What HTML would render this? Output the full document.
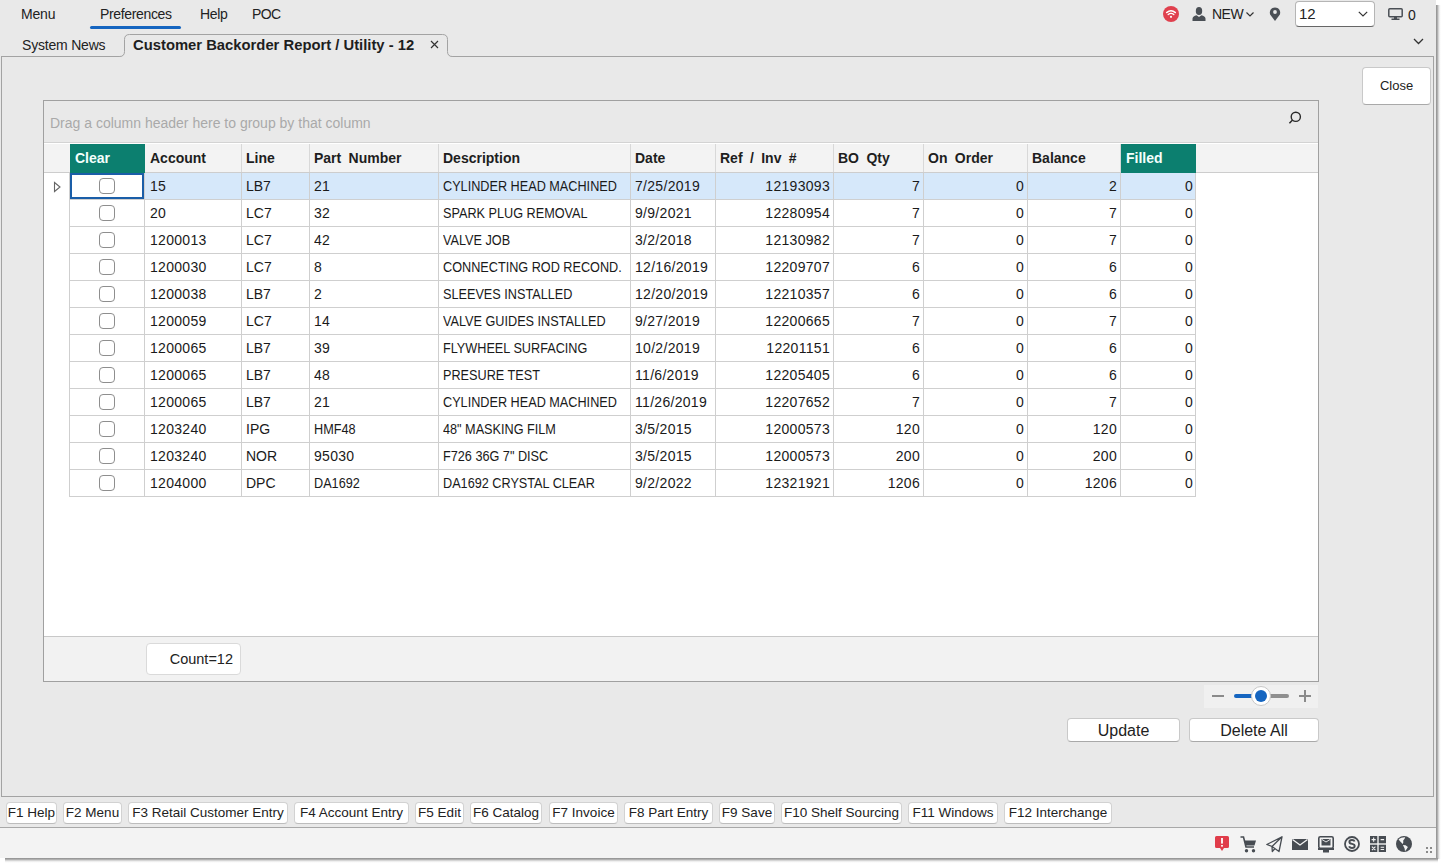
<!DOCTYPE html><html><head><meta charset='utf-8'><style>
*{box-sizing:border-box;margin:0;padding:0}
html,body{width:1442px;height:864px;overflow:hidden;background:#fff;font-family:"Liberation Sans", sans-serif;color:#222}
.a{position:absolute}
.t{position:absolute;white-space:pre;line-height:1}
#win{position:absolute;left:0;top:0;width:1436px;height:858px;background:#e9e9e9}
.cell{position:absolute;white-space:pre;overflow:hidden;font-size:13px;line-height:26px;color:#1a1a1a}
.hd{position:absolute;white-space:pre;font-size:14px;font-weight:700;line-height:28px;color:#1e1e1e;word-spacing:3.5px}
.fk{position:absolute;top:802px;height:22px;background:#fff;border:1px solid #d2d2d2;border-bottom-color:#bdbdbd;border-radius:4px;font-size:13.5px;line-height:20px;text-align:center;white-space:pre;color:#222}
.btn{position:absolute;background:#fff;border:1px solid #c9c9c9;border-bottom-color:#a9a9a9;border-radius:4px;text-align:center;white-space:pre;color:#222}
</style></head><body><div id='win'>
<div class='t' style='left:21px;top:7px;font-size:14px;letter-spacing:-0.2px'>Menu</div>
<div class='t' style='left:100px;top:7px;font-size:14px;letter-spacing:-0.35px'>Preferences</div>
<div class='a' style='left:90px;top:26px;width:91px;height:3px;border-radius:2px;background:#1565c0'></div>
<div class='t' style='left:200px;top:7px;font-size:14px;letter-spacing:-0.3px'>Help</div>
<div class='t' style='left:252px;top:7px;font-size:14px;letter-spacing:-0.6px'>POC</div>
<svg class='a' style='left:1162px;top:5px' width='18' height='18' viewBox='0 0 18 18'>
<circle cx='9' cy='9' r='8' fill='#e0404e'/>
<path d='M4.6 7.6 Q9 3.8 13.4 7.6' stroke='#fff' stroke-width='1.4' fill='none' stroke-linecap='round'/>
<path d='M6.2 9.5 Q9 7.2 11.8 9.5' stroke='#fff' stroke-width='1.4' fill='none' stroke-linecap='round'/>
<circle cx='9' cy='11.8' r='1.1' fill='#fff'/></svg>
<svg class='a' style='left:1192px;top:7px' width='14' height='14' viewBox='0 0 14 14'>
<ellipse cx='7' cy='4' rx='3.2' ry='4' fill='#4a4f55'/>
<path d='M0.5 14 L0.5 11.5 Q1 9 4.5 8.3 L7 10 L9.5 8.3 Q13 9 13.5 11.5 L13.5 14 Z' fill='#4a4f55'/></svg>
<div class='t' style='left:1212px;top:7px;font-size:14px;letter-spacing:-0.5px'>NEW</div>
<svg class='a' style='left:1246px;top:12px' width='8' height='5' viewBox='0 0 8 5'><path d='M0.5 0.5 L4 4 L7.5 0.5' stroke='#333' stroke-width='1.2' fill='none'/></svg>
<svg class='a' style='left:1269px;top:7px' width='12' height='14' viewBox='0 0 12 14'>
<path d='M6 14 L1.3 7.8 A5.2 5.2 0 1 1 10.7 7.8 Z' fill='#4a4f55'/><circle cx='6' cy='5' r='1.9' fill='#e9e9e9'/></svg>
<div class='a' style='left:1295px;top:1px;width:80px;height:26px;background:#fff;border:1px solid #b5b5b5;border-bottom:1.5px solid #666;border-radius:4px'></div>
<div class='t' style='left:1299px;top:6px;font-size:15px'>12</div>
<svg class='a' style='left:1358px;top:11px' width='10' height='6' viewBox='0 0 10 6'><path d='M0.8 0.8 L5 5 L9.2 0.8' stroke='#333' stroke-width='1.2' fill='none'/></svg>
<svg class='a' style='left:1388px;top:8px' width='15' height='12' viewBox='0 0 15 12'>
<rect x='0.8' y='0.8' width='13.4' height='8' rx='1' fill='none' stroke='#4a4f55' stroke-width='1.5'/>
<rect x='6' y='9' width='3' height='2' fill='#4a4f55'/><rect x='3.5' y='10.5' width='8' height='1.5' fill='#4a4f55'/></svg>
<div class='t' style='left:1408px;top:8px;font-size:14px'>0</div>
<div class='t' style='left:22px;top:38px;font-size:14px;letter-spacing:-0.2px'>System News</div>
<div class='a' style='left:1px;top:56px;width:1433px;height:741px;border:1px solid #a3a3a3;background:#e9e9e9'></div>
<svg class='a' style='left:0;top:0' width='470' height='60' viewBox='0 0 470 60'>
<path d='M119.5 57.5 L119.5 56.5 Q124.5 56.5 124.5 51.5 L124.5 39.5 Q124.5 34.5 129.5 34.5 L442.5 34.5 Q447.5 34.5 447.5 39.5 L447.5 51.5 Q447.5 56.5 452.5 56.5 L452.5 57.5 Z' fill='#e9e9e9'/>
<path d='M112 56.5 L119.5 56.5 Q124.5 56.5 124.5 51.5 L124.5 39.5 Q124.5 34.5 129.5 34.5 L442.5 34.5 Q447.5 34.5 447.5 39.5 L447.5 51.5 Q447.5 56.5 452.5 56.5 L460 56.5' fill='none' stroke='#a3a3a3' stroke-width='1'/></svg>
<div class='t' style='left:133px;top:38px;font-size:14.8px;font-weight:700;color:#1e1e1e'>Customer Backorder Report / Utility - 12</div>
<svg class='a' style='left:430px;top:40px' width='9' height='9' viewBox='0 0 9 9'><path d='M1 1 L8 8 M8 1 L1 8' stroke='#333' stroke-width='1.2'/></svg>
<svg class='a' style='left:1413px;top:38px' width='11' height='7' viewBox='0 0 11 7'><path d='M1 1 L5.5 5.5 L10 1' stroke='#333' stroke-width='1.3' fill='none'/></svg>
<div class='btn' style='left:1362px;top:67px;width:69px;height:38px;font-size:13px;line-height:36px'>Close</div>
<div class='a' style='left:43px;top:100px;width:1276px;height:582px;border:1px solid #a0a0a0;background:#fff'></div>
<div class='a' style='left:44px;top:101px;width:1274px;height:42px;background:#e9e9e9;border-bottom:1px solid #d3d3d3'></div>
<div class='t' style='left:50px;top:116px;font-size:14px;color:#a9a9a9'>Drag a column header here to group by that column</div>
<svg class='a' style='left:1287px;top:111px' width='15' height='15' viewBox='0 0 15 15'><circle cx='8.8' cy='5.8' r='4.6' fill='none' stroke='#2a2a2a' stroke-width='1.4'/><path d='M5.6 9 L2.4 12.2' stroke='#2a2a2a' stroke-width='1.5'/></svg>
<div class='a' style='left:44px;top:144px;width:1274px;height:28px;background:#f3f3f3'></div>
<div class='a' style='left:44px;top:172px;width:1274px;height:1px;background:#cdcdcd'></div>
<div class='a' style='left:70px;top:144px;width:75px;height:29px;background:#0c7f6f'></div>
<div class='hd' style='left:75px;top:144px;color:#f4fffd'>Clear</div>
<div class='hd' style='left:150px;top:144px'>Account</div>
<div class='hd' style='left:246px;top:144px'>Line</div>
<div class='hd' style='left:314px;top:144px'>Part Number</div>
<div class='hd' style='left:443px;top:144px'>Description</div>
<div class='hd' style='left:635px;top:144px'>Date</div>
<div class='hd' style='left:720px;top:144px'>Ref / Inv #</div>
<div class='hd' style='left:838px;top:144px'>BO Qty</div>
<div class='hd' style='left:928px;top:144px'>On Order</div>
<div class='hd' style='left:1032px;top:144px'>Balance</div>
<div class='a' style='left:1121px;top:144px;width:75px;height:29px;background:#0c7f6f'></div>
<div class='hd' style='left:1126px;top:144px;color:#f4fffd'>Filled</div>
<div class='a' style='left:241px;top:144px;width:1px;height:28px;background:#d8d8d8'></div>
<div class='a' style='left:309px;top:144px;width:1px;height:28px;background:#d8d8d8'></div>
<div class='a' style='left:438px;top:144px;width:1px;height:28px;background:#d8d8d8'></div>
<div class='a' style='left:630px;top:144px;width:1px;height:28px;background:#d8d8d8'></div>
<div class='a' style='left:715px;top:144px;width:1px;height:28px;background:#d8d8d8'></div>
<div class='a' style='left:833px;top:144px;width:1px;height:28px;background:#d8d8d8'></div>
<div class='a' style='left:923px;top:144px;width:1px;height:28px;background:#d8d8d8'></div>
<div class='a' style='left:1027px;top:144px;width:1px;height:28px;background:#d8d8d8'></div>
<div class='a' style='left:1120px;top:144px;width:1px;height:28px;background:#d8d8d8'></div>
<div class='a' style='left:145px;top:173px;width:1051px;height:26px;background:#d6e8fa'></div>
<div class='a' style='left:99px;top:178px;width:16px;height:16px;border:1px solid #8e8e8e;border-radius:4px;background:#fff'></div>
<div class='cell' style='left:150px;top:173px;font-size:14px;letter-spacing:0.3px;'>15</div>
<div class='cell' style='left:246px;top:173px;font-size:14px;'>LB7</div>
<div class='cell' style='left:314px;top:173px;font-size:14px;letter-spacing:0.3px;'>21</div>
<div class='cell' style='left:443px;top:173px;font-size:14px;'><span style='display:inline-block;transform:scaleX(0.905);transform-origin:0 50%'>CYLINDER HEAD MACHINED</span></div>
<div class='cell' style='left:635px;top:173px;font-size:14px;letter-spacing:0.3px;'>7/25/2019</div>
<div class='cell' style='left:715px;top:173px;width:115px;text-align:right;font-size:14px;letter-spacing:0.3px'>12193093</div>
<div class='cell' style='left:833px;top:173px;width:87px;text-align:right;font-size:14px;letter-spacing:0.3px'>7</div>
<div class='cell' style='left:923px;top:173px;width:101px;text-align:right;font-size:14px;letter-spacing:0.3px'>0</div>
<div class='cell' style='left:1027px;top:173px;width:90px;text-align:right;font-size:14px;letter-spacing:0.3px'>2</div>
<div class='cell' style='left:1120px;top:173px;width:73px;text-align:right;font-size:14px;letter-spacing:0.3px'>0</div>
<div class='a' style='left:69px;top:199px;width:1127px;height:1px;background:#cfcfcf'></div>
<div class='a' style='left:99px;top:205px;width:16px;height:16px;border:1px solid #8e8e8e;border-radius:4px;background:#fff'></div>
<div class='cell' style='left:150px;top:200px;font-size:14px;letter-spacing:0.3px;'>20</div>
<div class='cell' style='left:246px;top:200px;font-size:14px;'>LC7</div>
<div class='cell' style='left:314px;top:200px;font-size:14px;letter-spacing:0.3px;'>32</div>
<div class='cell' style='left:443px;top:200px;font-size:14px;'><span style='display:inline-block;transform:scaleX(0.905);transform-origin:0 50%'>SPARK PLUG REMOVAL</span></div>
<div class='cell' style='left:635px;top:200px;font-size:14px;letter-spacing:0.3px;'>9/9/2021</div>
<div class='cell' style='left:715px;top:200px;width:115px;text-align:right;font-size:14px;letter-spacing:0.3px'>12280954</div>
<div class='cell' style='left:833px;top:200px;width:87px;text-align:right;font-size:14px;letter-spacing:0.3px'>7</div>
<div class='cell' style='left:923px;top:200px;width:101px;text-align:right;font-size:14px;letter-spacing:0.3px'>0</div>
<div class='cell' style='left:1027px;top:200px;width:90px;text-align:right;font-size:14px;letter-spacing:0.3px'>7</div>
<div class='cell' style='left:1120px;top:200px;width:73px;text-align:right;font-size:14px;letter-spacing:0.3px'>0</div>
<div class='a' style='left:69px;top:226px;width:1127px;height:1px;background:#cfcfcf'></div>
<div class='a' style='left:99px;top:232px;width:16px;height:16px;border:1px solid #8e8e8e;border-radius:4px;background:#fff'></div>
<div class='cell' style='left:150px;top:227px;font-size:14px;letter-spacing:0.3px;'>1200013</div>
<div class='cell' style='left:246px;top:227px;font-size:14px;'>LC7</div>
<div class='cell' style='left:314px;top:227px;font-size:14px;letter-spacing:0.3px;'>42</div>
<div class='cell' style='left:443px;top:227px;font-size:14px;'><span style='display:inline-block;transform:scaleX(0.905);transform-origin:0 50%'>VALVE JOB</span></div>
<div class='cell' style='left:635px;top:227px;font-size:14px;letter-spacing:0.3px;'>3/2/2018</div>
<div class='cell' style='left:715px;top:227px;width:115px;text-align:right;font-size:14px;letter-spacing:0.3px'>12130982</div>
<div class='cell' style='left:833px;top:227px;width:87px;text-align:right;font-size:14px;letter-spacing:0.3px'>7</div>
<div class='cell' style='left:923px;top:227px;width:101px;text-align:right;font-size:14px;letter-spacing:0.3px'>0</div>
<div class='cell' style='left:1027px;top:227px;width:90px;text-align:right;font-size:14px;letter-spacing:0.3px'>7</div>
<div class='cell' style='left:1120px;top:227px;width:73px;text-align:right;font-size:14px;letter-spacing:0.3px'>0</div>
<div class='a' style='left:69px;top:253px;width:1127px;height:1px;background:#cfcfcf'></div>
<div class='a' style='left:99px;top:259px;width:16px;height:16px;border:1px solid #8e8e8e;border-radius:4px;background:#fff'></div>
<div class='cell' style='left:150px;top:254px;font-size:14px;letter-spacing:0.3px;'>1200030</div>
<div class='cell' style='left:246px;top:254px;font-size:14px;'>LC7</div>
<div class='cell' style='left:314px;top:254px;font-size:14px;letter-spacing:0.3px;'>8</div>
<div class='cell' style='left:443px;top:254px;font-size:14px;'><span style='display:inline-block;transform:scaleX(0.905);transform-origin:0 50%'>CONNECTING ROD RECOND.</span></div>
<div class='cell' style='left:635px;top:254px;font-size:14px;letter-spacing:0.3px;'>12/16/2019</div>
<div class='cell' style='left:715px;top:254px;width:115px;text-align:right;font-size:14px;letter-spacing:0.3px'>12209707</div>
<div class='cell' style='left:833px;top:254px;width:87px;text-align:right;font-size:14px;letter-spacing:0.3px'>6</div>
<div class='cell' style='left:923px;top:254px;width:101px;text-align:right;font-size:14px;letter-spacing:0.3px'>0</div>
<div class='cell' style='left:1027px;top:254px;width:90px;text-align:right;font-size:14px;letter-spacing:0.3px'>6</div>
<div class='cell' style='left:1120px;top:254px;width:73px;text-align:right;font-size:14px;letter-spacing:0.3px'>0</div>
<div class='a' style='left:69px;top:280px;width:1127px;height:1px;background:#cfcfcf'></div>
<div class='a' style='left:99px;top:286px;width:16px;height:16px;border:1px solid #8e8e8e;border-radius:4px;background:#fff'></div>
<div class='cell' style='left:150px;top:281px;font-size:14px;letter-spacing:0.3px;'>1200038</div>
<div class='cell' style='left:246px;top:281px;font-size:14px;'>LB7</div>
<div class='cell' style='left:314px;top:281px;font-size:14px;letter-spacing:0.3px;'>2</div>
<div class='cell' style='left:443px;top:281px;font-size:14px;'><span style='display:inline-block;transform:scaleX(0.905);transform-origin:0 50%'>SLEEVES INSTALLED</span></div>
<div class='cell' style='left:635px;top:281px;font-size:14px;letter-spacing:0.3px;'>12/20/2019</div>
<div class='cell' style='left:715px;top:281px;width:115px;text-align:right;font-size:14px;letter-spacing:0.3px'>12210357</div>
<div class='cell' style='left:833px;top:281px;width:87px;text-align:right;font-size:14px;letter-spacing:0.3px'>6</div>
<div class='cell' style='left:923px;top:281px;width:101px;text-align:right;font-size:14px;letter-spacing:0.3px'>0</div>
<div class='cell' style='left:1027px;top:281px;width:90px;text-align:right;font-size:14px;letter-spacing:0.3px'>6</div>
<div class='cell' style='left:1120px;top:281px;width:73px;text-align:right;font-size:14px;letter-spacing:0.3px'>0</div>
<div class='a' style='left:69px;top:307px;width:1127px;height:1px;background:#cfcfcf'></div>
<div class='a' style='left:99px;top:313px;width:16px;height:16px;border:1px solid #8e8e8e;border-radius:4px;background:#fff'></div>
<div class='cell' style='left:150px;top:308px;font-size:14px;letter-spacing:0.3px;'>1200059</div>
<div class='cell' style='left:246px;top:308px;font-size:14px;'>LC7</div>
<div class='cell' style='left:314px;top:308px;font-size:14px;letter-spacing:0.3px;'>14</div>
<div class='cell' style='left:443px;top:308px;font-size:14px;'><span style='display:inline-block;transform:scaleX(0.905);transform-origin:0 50%'>VALVE GUIDES INSTALLED</span></div>
<div class='cell' style='left:635px;top:308px;font-size:14px;letter-spacing:0.3px;'>9/27/2019</div>
<div class='cell' style='left:715px;top:308px;width:115px;text-align:right;font-size:14px;letter-spacing:0.3px'>12200665</div>
<div class='cell' style='left:833px;top:308px;width:87px;text-align:right;font-size:14px;letter-spacing:0.3px'>7</div>
<div class='cell' style='left:923px;top:308px;width:101px;text-align:right;font-size:14px;letter-spacing:0.3px'>0</div>
<div class='cell' style='left:1027px;top:308px;width:90px;text-align:right;font-size:14px;letter-spacing:0.3px'>7</div>
<div class='cell' style='left:1120px;top:308px;width:73px;text-align:right;font-size:14px;letter-spacing:0.3px'>0</div>
<div class='a' style='left:69px;top:334px;width:1127px;height:1px;background:#cfcfcf'></div>
<div class='a' style='left:99px;top:340px;width:16px;height:16px;border:1px solid #8e8e8e;border-radius:4px;background:#fff'></div>
<div class='cell' style='left:150px;top:335px;font-size:14px;letter-spacing:0.3px;'>1200065</div>
<div class='cell' style='left:246px;top:335px;font-size:14px;'>LB7</div>
<div class='cell' style='left:314px;top:335px;font-size:14px;letter-spacing:0.3px;'>39</div>
<div class='cell' style='left:443px;top:335px;font-size:14px;'><span style='display:inline-block;transform:scaleX(0.905);transform-origin:0 50%'>FLYWHEEL SURFACING</span></div>
<div class='cell' style='left:635px;top:335px;font-size:14px;letter-spacing:0.3px;'>10/2/2019</div>
<div class='cell' style='left:715px;top:335px;width:115px;text-align:right;font-size:14px;letter-spacing:0.3px'>12201151</div>
<div class='cell' style='left:833px;top:335px;width:87px;text-align:right;font-size:14px;letter-spacing:0.3px'>6</div>
<div class='cell' style='left:923px;top:335px;width:101px;text-align:right;font-size:14px;letter-spacing:0.3px'>0</div>
<div class='cell' style='left:1027px;top:335px;width:90px;text-align:right;font-size:14px;letter-spacing:0.3px'>6</div>
<div class='cell' style='left:1120px;top:335px;width:73px;text-align:right;font-size:14px;letter-spacing:0.3px'>0</div>
<div class='a' style='left:69px;top:361px;width:1127px;height:1px;background:#cfcfcf'></div>
<div class='a' style='left:99px;top:367px;width:16px;height:16px;border:1px solid #8e8e8e;border-radius:4px;background:#fff'></div>
<div class='cell' style='left:150px;top:362px;font-size:14px;letter-spacing:0.3px;'>1200065</div>
<div class='cell' style='left:246px;top:362px;font-size:14px;'>LB7</div>
<div class='cell' style='left:314px;top:362px;font-size:14px;letter-spacing:0.3px;'>48</div>
<div class='cell' style='left:443px;top:362px;font-size:14px;'><span style='display:inline-block;transform:scaleX(0.905);transform-origin:0 50%'>PRESURE TEST</span></div>
<div class='cell' style='left:635px;top:362px;font-size:14px;letter-spacing:0.3px;'>11/6/2019</div>
<div class='cell' style='left:715px;top:362px;width:115px;text-align:right;font-size:14px;letter-spacing:0.3px'>12205405</div>
<div class='cell' style='left:833px;top:362px;width:87px;text-align:right;font-size:14px;letter-spacing:0.3px'>6</div>
<div class='cell' style='left:923px;top:362px;width:101px;text-align:right;font-size:14px;letter-spacing:0.3px'>0</div>
<div class='cell' style='left:1027px;top:362px;width:90px;text-align:right;font-size:14px;letter-spacing:0.3px'>6</div>
<div class='cell' style='left:1120px;top:362px;width:73px;text-align:right;font-size:14px;letter-spacing:0.3px'>0</div>
<div class='a' style='left:69px;top:388px;width:1127px;height:1px;background:#cfcfcf'></div>
<div class='a' style='left:99px;top:394px;width:16px;height:16px;border:1px solid #8e8e8e;border-radius:4px;background:#fff'></div>
<div class='cell' style='left:150px;top:389px;font-size:14px;letter-spacing:0.3px;'>1200065</div>
<div class='cell' style='left:246px;top:389px;font-size:14px;'>LB7</div>
<div class='cell' style='left:314px;top:389px;font-size:14px;letter-spacing:0.3px;'>21</div>
<div class='cell' style='left:443px;top:389px;font-size:14px;'><span style='display:inline-block;transform:scaleX(0.905);transform-origin:0 50%'>CYLINDER HEAD MACHINED</span></div>
<div class='cell' style='left:635px;top:389px;font-size:14px;letter-spacing:0.3px;'>11/26/2019</div>
<div class='cell' style='left:715px;top:389px;width:115px;text-align:right;font-size:14px;letter-spacing:0.3px'>12207652</div>
<div class='cell' style='left:833px;top:389px;width:87px;text-align:right;font-size:14px;letter-spacing:0.3px'>7</div>
<div class='cell' style='left:923px;top:389px;width:101px;text-align:right;font-size:14px;letter-spacing:0.3px'>0</div>
<div class='cell' style='left:1027px;top:389px;width:90px;text-align:right;font-size:14px;letter-spacing:0.3px'>7</div>
<div class='cell' style='left:1120px;top:389px;width:73px;text-align:right;font-size:14px;letter-spacing:0.3px'>0</div>
<div class='a' style='left:69px;top:415px;width:1127px;height:1px;background:#cfcfcf'></div>
<div class='a' style='left:99px;top:421px;width:16px;height:16px;border:1px solid #8e8e8e;border-radius:4px;background:#fff'></div>
<div class='cell' style='left:150px;top:416px;font-size:14px;letter-spacing:0.3px;'>1203240</div>
<div class='cell' style='left:246px;top:416px;font-size:14px;'>IPG</div>
<div class='cell' style='left:314px;top:416px;font-size:14px;'><span style='display:inline-block;transform:scaleX(0.905);transform-origin:0 50%'>HMF48</span></div>
<div class='cell' style='left:443px;top:416px;font-size:14px;'><span style='display:inline-block;transform:scaleX(0.905);transform-origin:0 50%'>48&quot; MASKING FILM</span></div>
<div class='cell' style='left:635px;top:416px;font-size:14px;letter-spacing:0.3px;'>3/5/2015</div>
<div class='cell' style='left:715px;top:416px;width:115px;text-align:right;font-size:14px;letter-spacing:0.3px'>12000573</div>
<div class='cell' style='left:833px;top:416px;width:87px;text-align:right;font-size:14px;letter-spacing:0.3px'>120</div>
<div class='cell' style='left:923px;top:416px;width:101px;text-align:right;font-size:14px;letter-spacing:0.3px'>0</div>
<div class='cell' style='left:1027px;top:416px;width:90px;text-align:right;font-size:14px;letter-spacing:0.3px'>120</div>
<div class='cell' style='left:1120px;top:416px;width:73px;text-align:right;font-size:14px;letter-spacing:0.3px'>0</div>
<div class='a' style='left:69px;top:442px;width:1127px;height:1px;background:#cfcfcf'></div>
<div class='a' style='left:99px;top:448px;width:16px;height:16px;border:1px solid #8e8e8e;border-radius:4px;background:#fff'></div>
<div class='cell' style='left:150px;top:443px;font-size:14px;letter-spacing:0.3px;'>1203240</div>
<div class='cell' style='left:246px;top:443px;font-size:14px;'>NOR</div>
<div class='cell' style='left:314px;top:443px;font-size:14px;letter-spacing:0.3px;'>95030</div>
<div class='cell' style='left:443px;top:443px;font-size:14px;'><span style='display:inline-block;transform:scaleX(0.905);transform-origin:0 50%'>F726 36G 7&quot; DISC</span></div>
<div class='cell' style='left:635px;top:443px;font-size:14px;letter-spacing:0.3px;'>3/5/2015</div>
<div class='cell' style='left:715px;top:443px;width:115px;text-align:right;font-size:14px;letter-spacing:0.3px'>12000573</div>
<div class='cell' style='left:833px;top:443px;width:87px;text-align:right;font-size:14px;letter-spacing:0.3px'>200</div>
<div class='cell' style='left:923px;top:443px;width:101px;text-align:right;font-size:14px;letter-spacing:0.3px'>0</div>
<div class='cell' style='left:1027px;top:443px;width:90px;text-align:right;font-size:14px;letter-spacing:0.3px'>200</div>
<div class='cell' style='left:1120px;top:443px;width:73px;text-align:right;font-size:14px;letter-spacing:0.3px'>0</div>
<div class='a' style='left:69px;top:469px;width:1127px;height:1px;background:#cfcfcf'></div>
<div class='a' style='left:99px;top:475px;width:16px;height:16px;border:1px solid #8e8e8e;border-radius:4px;background:#fff'></div>
<div class='cell' style='left:150px;top:470px;font-size:14px;letter-spacing:0.3px;'>1204000</div>
<div class='cell' style='left:246px;top:470px;font-size:14px;'>DPC</div>
<div class='cell' style='left:314px;top:470px;font-size:14px;'><span style='display:inline-block;transform:scaleX(0.905);transform-origin:0 50%'>DA1692</span></div>
<div class='cell' style='left:443px;top:470px;font-size:14px;'><span style='display:inline-block;transform:scaleX(0.905);transform-origin:0 50%'>DA1692 CRYSTAL CLEAR</span></div>
<div class='cell' style='left:635px;top:470px;font-size:14px;letter-spacing:0.3px;'>9/2/2022</div>
<div class='cell' style='left:715px;top:470px;width:115px;text-align:right;font-size:14px;letter-spacing:0.3px'>12321921</div>
<div class='cell' style='left:833px;top:470px;width:87px;text-align:right;font-size:14px;letter-spacing:0.3px'>1206</div>
<div class='cell' style='left:923px;top:470px;width:101px;text-align:right;font-size:14px;letter-spacing:0.3px'>0</div>
<div class='cell' style='left:1027px;top:470px;width:90px;text-align:right;font-size:14px;letter-spacing:0.3px'>1206</div>
<div class='cell' style='left:1120px;top:470px;width:73px;text-align:right;font-size:14px;letter-spacing:0.3px'>0</div>
<div class='a' style='left:69px;top:496px;width:1127px;height:1px;background:#cfcfcf'></div>
<div class='a' style='left:69px;top:173px;width:1px;height:323px;background:#cfcfcf'></div>
<div class='a' style='left:144px;top:173px;width:1px;height:323px;background:#cfcfcf'></div>
<div class='a' style='left:241px;top:173px;width:1px;height:323px;background:#cfcfcf'></div>
<div class='a' style='left:309px;top:173px;width:1px;height:323px;background:#cfcfcf'></div>
<div class='a' style='left:438px;top:173px;width:1px;height:323px;background:#cfcfcf'></div>
<div class='a' style='left:630px;top:173px;width:1px;height:323px;background:#cfcfcf'></div>
<div class='a' style='left:715px;top:173px;width:1px;height:323px;background:#cfcfcf'></div>
<div class='a' style='left:833px;top:173px;width:1px;height:323px;background:#cfcfcf'></div>
<div class='a' style='left:923px;top:173px;width:1px;height:323px;background:#cfcfcf'></div>
<div class='a' style='left:1027px;top:173px;width:1px;height:323px;background:#cfcfcf'></div>
<div class='a' style='left:1120px;top:173px;width:1px;height:323px;background:#cfcfcf'></div>
<div class='a' style='left:1195px;top:173px;width:1px;height:323px;background:#cfcfcf'></div>
<div class='a' style='left:70px;top:173px;width:74px;height:26px;border:2px solid #1a5ea8'></div>
<svg class='a' style='left:53px;top:181px' width='9' height='12' viewBox='0 0 9 12'><path d='M1.5 1.5 L7 6 L1.5 10.5 Z' fill='none' stroke='#666' stroke-width='1.1' stroke-linejoin='miter'/></svg>
<div class='a' style='left:44px;top:636px;width:1274px;height:45px;background:#f2f2f2;border-top:1px solid #c8c8c8'></div>
<div class='btn' style='left:146px;top:643px;width:95px;height:32px;border-color:#dadada;font-size:14.5px;line-height:31px;text-align:right;padding-right:7px'>Count=12</div>
<div class='a' style='left:1204px;top:685px;width:114px;height:23px;background:#f0f0f0'></div>
<div class='a' style='left:1212px;top:695px;width:12px;height:2px;background:#8a8a8a'></div>
<div class='a' style='left:1234px;top:694px;width:24px;height:4px;border-radius:2px;background:#1565c0'></div>
<div class='a' style='left:1266px;top:694px;width:23px;height:4px;border-radius:2px;background:#8f8f8f'></div>
<div class='a' style='left:1251px;top:686px;width:20px;height:20px;border-radius:50%;background:#fff;border:1px solid #c8c8c8'></div>
<div class='a' style='left:1255px;top:690px;width:12px;height:12px;border-radius:50%;background:#1565c0'></div>
<div class='a' style='left:1299px;top:695px;width:12px;height:2px;background:#8a8a8a'></div>
<div class='a' style='left:1304px;top:690px;width:2px;height:12px;background:#8a8a8a'></div>
<div class='btn' style='left:1067px;top:718px;width:113px;height:24px;font-size:16px;line-height:24px'>Update</div>
<div class='btn' style='left:1189px;top:718px;width:130px;height:24px;font-size:16px;line-height:24px'>Delete All</div>
<div class='fk' style='left:6px;width:51px'>F1 Help</div>
<div class='fk' style='left:63px;width:59px'>F2 Menu</div>
<div class='fk' style='left:128px;width:160px'>F3 Retail Customer Entry</div>
<div class='fk' style='left:294px;width:115px'>F4 Account Entry</div>
<div class='fk' style='left:415px;width:49px'>F5 Edit</div>
<div class='fk' style='left:470px;width:72px'>F6 Catalog</div>
<div class='fk' style='left:549px;width:69px'>F7 Invoice</div>
<div class='fk' style='left:624px;width:89px'>F8 Part Entry</div>
<div class='fk' style='left:719px;width:56px'>F9 Save</div>
<div class='fk' style='left:781px;width:121px'>F10 Shelf Sourcing</div>
<div class='fk' style='left:908px;width:90px'>F11 Windows</div>
<div class='fk' style='left:1004px;width:108px'>F12 Interchange</div>
<div class='a' style='left:0;top:827px;width:1436px;height:31px;background:#f3f3f3;border-top:1px solid #a8a8a8'></div>
<svg class='a' style='left:1214px;top:835px' width='16' height='17' viewBox='0 0 16 17'>
<path d='M2.5 1 H13.5 Q15 1 15 2.5 V11.5 Q15 13 13.5 13 H10 L8 16 L6 13 H2.5 Q1 13 1 11.5 V2.5 Q1 1 2.5 1 Z' fill='#e03c4a'/>
<rect x='7.1' y='3' width='1.8' height='5.6' fill='#fff'/><rect x='7.1' y='10' width='1.8' height='1.6' fill='#fff'/></svg>
<svg class='a' style='left:1240px;top:836px' width='17' height='17' viewBox='0 0 17 17'>
<path d='M0.5 1 H3.5 L6 11 H14' stroke='#474c52' stroke-width='1.6' fill='none'/>
<path d='M4.5 4.5 H16 L14.5 9.5 H5.6 Z' fill='#474c52'/>
<circle cx='6.5' cy='14.8' r='1.7' fill='#474c52'/><circle cx='13.5' cy='14.8' r='1.7' fill='#474c52'/></svg>
<svg class='a' style='left:1266px;top:836px' width='17' height='17' viewBox='0 0 17 17'>
<path d='M16 0.8 L0.8 8.5 L6 10.5 L16 0.8 L13 15.5 L6 10.5 L6.3 15.5 L9 12.5' stroke='#474c52' stroke-width='1.3' fill='none' stroke-linejoin='round'/></svg>
<svg class='a' style='left:1292px;top:839px' width='16' height='11' viewBox='0 0 16 11'>
<path d='M0 0 H16 V11 H0 Z' fill='#474c52'/><path d='M0.5 0.5 L8 6 L15.5 0.5' stroke='#f3f3f3' stroke-width='1.3' fill='none'/></svg>
<svg class='a' style='left:1318px;top:836px' width='16' height='17' viewBox='0 0 16 17'>
<rect x='0.8' y='0.8' width='14.4' height='11.5' rx='1.5' fill='none' stroke='#474c52' stroke-width='1.6'/>
<rect x='3.5' y='3' width='9' height='6.5' fill='#474c52'/><path d='M4 3.5 L8 6 L12 3.5' stroke='#f3f3f3' stroke-width='0.9' fill='none'/>
<rect x='0' y='12' width='16' height='2' fill='#474c52'/><rect x='5' y='14' width='6' height='2.5' fill='#474c52'/></svg>
<svg class='a' style='left:1344px;top:836px' width='16' height='16' viewBox='0 0 16 16'>
<circle cx='8' cy='8' r='7' fill='none' stroke='#474c52' stroke-width='1.8'/>
<path d='M10.6 5.6 Q10.2 4 8 4 Q5.4 4 5.4 5.9 Q5.4 7.4 8 7.9 Q10.7 8.4 10.7 10.1 Q10.7 12 8 12 Q5.6 12 5.2 10.3' fill='none' stroke='#474c52' stroke-width='1.9' stroke-linecap='butt'/></svg>
<svg class='a' style='left:1370px;top:836px' width='16' height='16' viewBox='0 0 16 16'>
<rect x='0' y='0' width='7.3' height='7.3' fill='#474c52'/><rect x='8.7' y='0' width='7.3' height='7.3' fill='#474c52'/>
<rect x='0' y='8.7' width='7.3' height='7.3' fill='#474c52'/><rect x='8.7' y='8.7' width='7.3' height='7.3' fill='#474c52'/>
<path d='M3.65 1.6 V5.7 M1.6 3.65 H5.7 M10.6 3.65 H14.1 M1.9 10.6 L5.4 14.1 M5.4 10.6 L1.9 14.1 M10.6 11.2 H14.1 M10.6 13.5 H14.1' stroke='#f3f3f3' stroke-width='1.1'/></svg>
<svg class='a' style='left:1396px;top:836px' width='16' height='16' viewBox='0 0 16 16'>
<circle cx='8' cy='8' r='8' fill='#474c52'/>
<path d='M2.6 3.2 Q5 1.1 9.2 1.2 L8.6 2.8 L7.2 4.4 L7.3 6.4 L6.6 8.1 L5.3 6.6 L3.6 4.8 Z' fill='#f3f3f3'/>
<path d='M6.9 8.9 L9.6 9.3 L11.9 11.1 L10.6 13.2 L9 15.3 L8.6 12.6 Z' fill='#f3f3f3'/></svg>
<div class='a' style='left:1426px;top:847px;width:2px;height:2px;background:#8a8a8a'></div>
<div class='a' style='left:1430px;top:847px;width:2px;height:2px;background:#8a8a8a'></div>
<div class='a' style='left:1426px;top:851px;width:2px;height:2px;background:#8a8a8a'></div>
<div class='a' style='left:1430px;top:851px;width:2px;height:2px;background:#8a8a8a'></div>
</div>
<div class='a' style='left:1436px;top:5px;width:6px;height:854px;background:linear-gradient(to right,#959595 0,#9c9c9c 1px,#c4c4c4 2px,#e6e6e6 3px,#f8f8f8 4px,#fff 5px)'></div>
<div class='a' style='left:5px;top:858px;width:1433px;height:6px;background:linear-gradient(to bottom,#959595 0,#9c9c9c 1px,#c4c4c4 2px,#e6e6e6 3px,#f8f8f8 4px,#fff 5px)'></div>
</body></html>
